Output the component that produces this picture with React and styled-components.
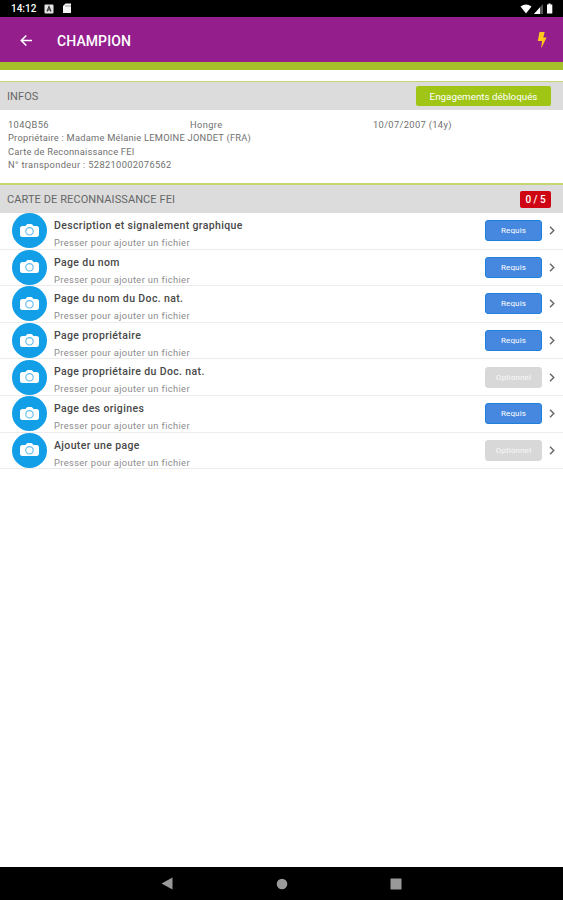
import React from 'react';
import styled, { createGlobalStyle } from 'styled-components';

const GlobalStyle = createGlobalStyle`
  * {
    box-sizing: border-box;
  }

  body {
    margin: 0;
    background: #fff;
    font-family: Roboto, "Liberation Sans", sans-serif;
  }
`;

const Screen = styled.div`
  display: flex;
  flex-direction: column;
  width: 563px;
  height: 900px;
  background: #fff;
  overflow: hidden;
`;

const StatusBar = styled.div`
  display: flex;
  align-items: center;
  flex: none;
  height: 17px;
  padding: 0 9px 0 11px;
  background: #000;
  color: #fff;
`;

const Clock = styled.span`
  width: 33px;
  font-size: 10px;
  font-weight: 500;
  line-height: 17px;
`;

const StatusIcons = styled.div`
  display: flex;
  align-items: center;
  gap: ${(props) => props.$gap}px;
  margin-left: ${(props) => (props.$right ? 'auto' : '0')};
`;

const Header = styled.header`
  display: flex;
  align-items: center;
  flex: none;
  height: 53px;
  padding: 0 15px 0 20px;
  background: #931e8c;
  border-bottom: 8px solid #a5c02b;
`;

const BackIcon = styled.svg`
  margin-top: 1px;
`;

const Title = styled.h1`
  flex: 1;
  margin: 2px 0 0 24px;
  color: #fff;
  font-size: 14px;
  font-weight: 500;
  line-height: 20px;
  letter-spacing: 0.1px;
`;

const SectionBar = styled.div`
  display: flex;
  align-items: center;
  justify-content: space-between;
  flex: none;
  height: ${(props) => props.$height}px;
  margin-top: ${(props) => props.$top || 0}px;
  padding: 0 12px 0 7px;
  background: #dcdcdc;
  border-top: ${(props) => props.$line}px solid #c3d672;
`;

const SectionTitle = styled.h2`
  margin: 0;
  color: #666;
  font-size: 11px;
  font-weight: 400;
  letter-spacing: 0.09px;
`;

const UnlockedButton = styled.button`
  width: 135px;
  height: 20px;
  padding: 0;
  border: none;
  border-radius: 2px;
  background: #a0c515;
  color: #fff;
  font-family: inherit;
  font-size: 9.8px;
  line-height: 21px;
`;

const Counter = styled.span`
  width: 31px;
  height: 17px;
  border-radius: 2px;
  background: #d00513;
  color: #fff;
  font-size: 10px;
  font-weight: 500;
  line-height: 17px;
  text-align: center;
`;

const Infos = styled.div`
  flex: none;
  height: 73px;
  padding: 8px 7px 0 8px;
  color: #707070;
  font-size: 9.3px;
  line-height: 13.4px;
`;

const InfoColumns = styled.div`
  display: grid;
  grid-template-columns: 182px 183px 1fr;
  letter-spacing: 0.36px;
`;

const InfoLine = styled.div`
  letter-spacing: ${(props) => props.$spacing}px;
`;

const List = styled.div`
  flex: 1;
`;

const Row = styled.div`
  display: flex;
  align-items: center;
  height: 36.6px;
  padding: 0 8px 0 12px;
  border-bottom: 1px solid #ececec;
`;

const Avatar = styled.div`
  display: flex;
  align-items: center;
  justify-content: center;
  flex: none;
  width: 35px;
  height: 35px;
  border-radius: 50%;
  background: #129fe8;
`;

const RowText = styled.div`
  flex: 1;
  height: 100%;
  padding: 4px 0 0 7px;
`;

const RowTitle = styled.div`
  color: #484848;
  font-size: 10.5px;
  font-weight: 500;
  line-height: 17px;
  letter-spacing: 0.37px;
`;

const RowHint = styled.div`
  color: #8c8c8c;
  font-size: 9.3px;
  line-height: 18px;
  letter-spacing: 0.37px;
`;

const Tag = styled.span`
  width: 57px;
  height: 21px;
  margin-right: 7px;
  border: 1px solid ${(props) => (props.$required ? '#1e7fdc' : '#d8d8d8')};
  border-radius: 3px;
  background: ${(props) => (props.$required ? '#4688df' : '#d8d8d8')};
  color: ${(props) => (props.$required ? '#fff' : '#f8f8f8')};
  font-size: 8px;
  line-height: 20px;
  letter-spacing: 0.15px;
  text-align: center;
`;

const NavBar = styled.nav`
  display: flex;
  align-items: center;
  justify-content: space-between;
  flex: none;
  height: 33px;
  padding: 0 161px;
  background: #000;
`;

const pages = [
  { title: 'Description et signalement graphique', required: true },
  { title: 'Page du nom', required: true },
  { title: 'Page du nom du Doc. nat.', required: true },
  { title: 'Page propriétaire', required: true },
  { title: 'Page propriétaire du Doc. nat.', required: false },
  { title: 'Page des origines', required: true },
  { title: 'Ajouter une page', required: false },
];

function CameraIcon() {
  return (
    <svg width="21" height="16" viewBox="0 0 21 16">
      <path
        d="M3.5 3h3l1-1.3Q8 1 8.8 1h3.4q.8 0 1.3.7l1 1.3h3Q20 3 20 5.500v5.500Q20 14 17.500 14h-14Q1 14 1 11.500V5.500Q1 3 3.500 3z"
        fill="#fff"
      />
      <circle cx="10.500" cy="8.300" r="3.700" fill="none" stroke="#5cbbed" strokeWidth="1.1" />
    </svg>
  );
}

function PageRow({ title, required }) {
  return (
    <Row>
      <Avatar>
        <CameraIcon />
      </Avatar>
      <RowText>
        <RowTitle>{title}</RowTitle>
        <RowHint>Presser pour ajouter un fichier</RowHint>
      </RowText>
      <Tag $required={required}>{required ? 'Requis' : 'Optionnel'}</Tag>
      <svg width="6" height="9" viewBox="0 0 6 9">
        <path d="M1 0.700l3.800 3.800L1 8.300" fill="none" stroke="#666" strokeWidth="1.4" />
      </svg>
    </Row>
  );
}

function App() {
  return (
    <>
      <GlobalStyle />
      <Screen>
        <StatusBar>
          <Clock>14:12</Clock>
          <StatusIcons $gap={8}>
            <svg width="10" height="10" viewBox="0 0 10 10">
              <rect x="0.5" y="0.5" width="9" height="9" rx="1" fill="#e4e4e4" />
              <path d="M3 7.5l2-5 2 5M3.7 6h2.6" fill="none" stroke="#333" strokeWidth="1.2" />
            </svg>
            <svg width="10" height="11" viewBox="0 0 10 11">
              <path d="M3.5 0.5H9v9.5H1V3z" fill="#f5f5f5" />
              <path d="M4 2v2M6 2v2M8 2v2" stroke="#777" strokeWidth="0.7" />
            </svg>
          </StatusIcons>
          <StatusIcons $right $gap={2}>
            <svg width="12" height="10" viewBox="0 0 12 10">
              <path d="M0.5 2.5Q6-1.5 11.5 2.5L6 9.5z" fill="#fff" />
            </svg>
            <svg width="10" height="10" viewBox="0 0 10 10">
              <path d="M9 0v10H0z" fill="#555" />
              <path d="M6 3.3V10H0z" fill="#fff" />
            </svg>
            <svg width="8" height="11" viewBox="0 0 8 11">
              <path d="M2.5 0.5h2v1h1.8v9H1v-9h1.5z" fill="#fff" />
            </svg>
          </StatusIcons>
        </StatusBar>

        <Header>
          <BackIcon width="13" height="13" viewBox="0 0 13 13">
            <path d="M12 6.5H1.5M6.3 1.5l-5 5 5 5" fill="none" stroke="#fff" strokeWidth="1.6" />
          </BackIcon>
          <Title>CHAMPION</Title>
          <svg width="12" height="20" viewBox="0 0 12 20">
            <path d="M3.5 2h5.2L7.3 7.5h3.3L5.2 18.5 6 11H1.8z" fill="#ffc91c" />
          </svg>
        </Header>

        <SectionBar $top={11} $height={29} $line={1}>
          <SectionTitle>INFOS</SectionTitle>
          <UnlockedButton>Engagements débloqués</UnlockedButton>
        </SectionBar>
        <Infos>
          <InfoColumns>
            <span>104QB56</span>
            <span>Hongre</span>
            <span>10/07/2007 (14y)</span>
          </InfoColumns>
          <InfoLine $spacing={0.24}>Propriétaire : Madame Mélanie LEMOINE JONDET (FRA)</InfoLine>
          <InfoLine $spacing={0.22}>Carte de Reconnaissance FEI</InfoLine>
          <InfoLine $spacing={0.33}>N° transpondeur : 528210002076562</InfoLine>
        </Infos>

        <SectionBar $height={30} $line={2}>
          <SectionTitle>CARTE DE RECONNAISSANCE FEI</SectionTitle>
          <Counter>0 / 5</Counter>
        </SectionBar>
        <List>
          {pages.map((page) => (
            <PageRow key={page.title} title={page.title} required={page.required} />
          ))}
        </List>

        <NavBar>
          <svg width="12" height="13" viewBox="0 0 12 13">
            <path d="M11.5 0.5v12L0.5 6.5z" fill="#999" />
          </svg>
          <svg width="12" height="12" viewBox="0 0 12 12">
            <circle cx="6" cy="6" r="5.3" fill="#999" />
          </svg>
          <svg width="12" height="12" viewBox="0 0 12 12">
            <rect x="0.5" y="0.5" width="11" height="11" fill="#999" />
          </svg>
        </NavBar>
      </Screen>
    </>
  );
}

export default App;
